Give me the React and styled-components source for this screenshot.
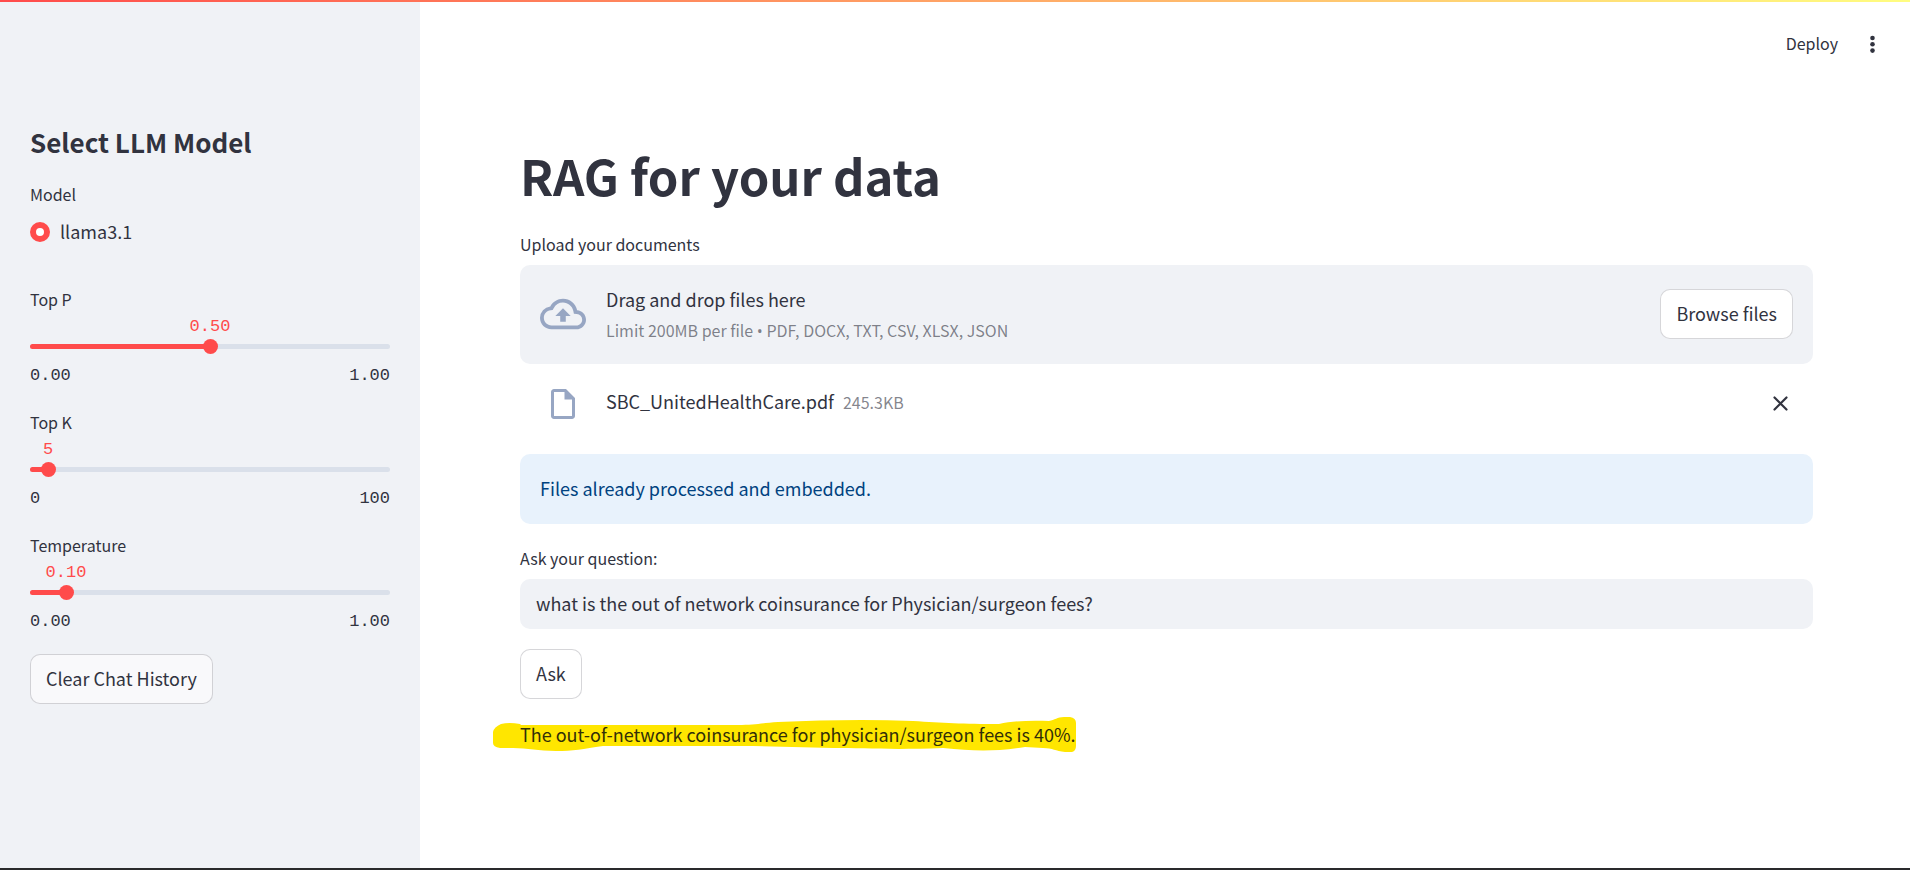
import React, { useId, useState } from "react";
import styled, { createGlobalStyle } from "styled-components";
import { MdOutlineInsertDriveFile } from "react-icons/md";

const sans = `"Noto Sans CJK SC", "Open Sans", sans-serif`;
const mono = `"Liberation Mono", monospace`;
const ink = "#31333f";
const faded = "rgba(49, 51, 63, 0.6)";
const border = "rgba(49, 51, 63, 0.2)";
const panel = "#f0f2f6";
const primary = "#ff4b4b";

const GlobalStyle = createGlobalStyle`
  *, *::before, *::after { box-sizing: border-box; }
  body { margin: 0; background: #fff; color: ${ink}; font: 400 18px/30px ${sans}; }
  button, input { font: inherit; color: inherit; }
  h1, h2, p { margin: 0; }
`;

const Page = styled.div`
  display: flex;
  flex-direction: column;
  min-height: 100vh;
  border-bottom: 2px solid #2a2a2c;
`;

const Decoration = styled.div`
  height: 2px;
  background: linear-gradient(90deg, #ff4b4b, #fffd80);
`;

const Columns = styled.div`
  display: flex;
  flex: 1;
`;

const Sidebar = styled.aside`
  display: flex;
  flex-direction: column;
  align-items: stretch;
  gap: 20px;
  flex: 0 0 420px;
  padding: 121px 30px 20px;
  background: ${panel};
`;

const SidebarTitle = styled.h2`
  font-size: 26px;
  line-height: 38px;
  font-weight: 600;
`;

const Main = styled.main`
  flex: 1;
  min-width: 0;
`;

const Toolbar = styled.header`
  display: flex;
  align-items: center;
  justify-content: flex-end;
  gap: 20px;
  height: 84px;
  padding: 0 22px;
`;

const PlainButton = styled.button`
  display: flex;
  align-items: center;
  justify-content: center;
  min-width: 30px;
  height: 30px;
  padding: 0 0 ${(p) => (p.$text ? "2px" : "0")};
  border: 0;
  background: none;
  font-size: 16px;
  cursor: pointer;
`;

const Content = styled.div`
  display: flex;
  flex-direction: column;
  gap: 20px;
  padding: 54px 97px 60px 100px;
`;

const Title = styled.h1`
  font-size: 49px;
  line-height: 70px;
  font-weight: 700;
`;

const Label = styled.label`
  display: block;
  margin-bottom: ${(p) => (p.$tight ? "2px" : "6px")};
  font-size: 16px;
  line-height: 29px;
`;

const RadioGroup = styled.fieldset`
  margin: 0;
  padding: 0 0 19px;
  border: 0;
`;

const Legend = styled.legend`
  margin-bottom: 8px;
  padding: 0;
  font-size: 16px;
  line-height: 27px;
`;

const RadioOption = styled.label`
  display: flex;
  align-items: center;
  gap: 10px;
`;

const Radio = styled.input`
  appearance: none;
  width: 20px;
  height: 20px;
  margin: 2px 0 0;
  border: 6px solid ${primary};
  border-radius: 50%;
  background: #fff;
`;

const SliderBlock = styled.div`
  padding-bottom: 2px;
`;

const ValueRow = styled.div`
  position: relative;
  height: 20px;
  margin-bottom: 3px;
`;

const Value = styled.output`
  position: absolute;
  transform: translateX(-50%);
  color: ${primary};
  font: 17px/22px ${mono};
`;

const SliderTrack = styled.div`
  display: grid;
  align-items: center;
  height: 15px;
  > * { grid-area: 1 / 1; }
`;

const Rail = styled.div`
  height: 5px;
  border-radius: 3px;
  background: #dae0ea;
  overflow: hidden;
`;

const RailFill = styled.div`
  height: 100%;
  background: ${primary};
`;

const Range = styled.input`
  appearance: none;
  width: calc(100% + 15px);
  height: 15px;
  margin: 0 -7px;
  background: transparent;
  cursor: pointer;
  &::-webkit-slider-thumb {
    appearance: none;
    width: 15px;
    height: 15px;
    border: 0;
    border-radius: 50%;
    background: ${primary};
  }
`;

const Ticks = styled.div`
  display: flex;
  justify-content: space-between;
  margin-top: 12px;
  font: 17px/20px ${mono};
`;

const Button = styled.button`
  align-self: flex-start;
  height: 50px;
  padding: 0 15px 2px;
  border: 1px solid ${border};
  border-radius: 10px;
  background: ${(p) => (p.$soft ? "#f9f9fb" : "#fff")};
  white-space: nowrap;
  cursor: pointer;
`;

const Dropzone = styled.section`
  display: flex;
  align-items: center;
  gap: 20px;
  min-height: 99px;
  padding: 0 20px 1px;
  border-radius: 10px;
  background: ${panel};
  > button { align-self: center; }
`;

const IconSlot = styled.div`
  display: flex;
  justify-content: center;
  flex: 0 0 46px;
  color: #97a6c3;
`;

const DropText = styled.div`
  display: grid;
  gap: 3px;
  flex: 1;
`;

const Small = styled.span`
  color: ${faded};
  font-size: 16px;
  line-height: 27px;
`;

const Bullet = styled.span`
  font-family: "Open Sans", sans-serif;
`;

const FileRow = styled.div`
  display: flex;
  align-items: flex-start;
  gap: 20px;
  margin: 22px 0 12px;
  padding: 0 18px 0 20px;
`;

const FileInfo = styled.div`
  display: flex;
  align-items: baseline;
  gap: 9px;
  flex: 1;
`;

const FileSize = styled.span`
  color: ${faded};
  font-size: 16px;
`;

const Info = styled.div`
  padding: 19px 20px 21px;
  border-radius: 10px;
  background: #e8f2fc;
  color: #004280;
`;

const TextInput = styled.input`
  display: block;
  width: 100%;
  height: 50px;
  padding: 0 16px 2px;
  border: 0;
  border-radius: 10px;
  background: ${panel};
`;

const Answer = styled.p`
  position: relative;
  color: #322f08;
`;

const AnswerText = styled.span`
  position: relative;
`;

const Marker = styled.svg`
  position: absolute;
  left: -27px;
  top: -2px;
`;

function CloudUploadIcon() {
  return (
    <svg width="46" height="46" viewBox="0 0 24 24" fill="currentColor" aria-hidden="true">
      <path d="M19.35 10.04A7.49 7.49 0 0 0 12 4C9.11 4 6.6 5.64 5.35 8.04A5.994 5.994 0 0 0 0 14c0 3.31 2.69 6 6 6h13c2.76 0 5-2.24 5-5 0-2.64-2.05-4.78-4.65-4.96zM19 18H6c-2.21 0-4-1.79-4-4 0-2.05 1.53-3.76 3.56-3.97l1.07-.11.5-.95A5.469 5.469 0 0 1 12 6c2.62 0 4.88 1.86 5.39 4.43l.3 1.5 1.53.11A2.98 2.98 0 0 1 22 15c0 1.65-1.35 3-3 3zM8 13h2.55v3h2.9v-3H16l-4-4z" />
    </svg>
  );
}

function Slider({ label, min, max, step, initial, digits }) {
  const id = useId();
  const [value, setValue] = useState(initial);
  const percent = ((value - min) / (max - min)) * 100;
  return (
    <SliderBlock>
      <Label htmlFor={id} $tight>{label}</Label>
      <ValueRow>
        <Value htmlFor={id} style={{ left: `${percent}%` }}>{value.toFixed(digits)}</Value>
      </ValueRow>
      <SliderTrack>
        <Rail><RailFill style={{ width: `${percent}%` }} /></Rail>
        <Range
          id={id}
          type="range"
          min={min}
          max={max}
          step={step}
          value={value}
          onChange={(e) => setValue(Number(e.target.value))}
        />
      </SliderTrack>
      <Ticks>
        <span>{min.toFixed(digits)}</span>
        <span>{max.toFixed(digits)}</span>
      </Ticks>
    </SliderBlock>
  );
}

export default function App() {
  const [question, setQuestion] = useState(
    "what is the out of network coinsurance for Physician/surgeon fees?"
  );
  return (
    <Page>
      <GlobalStyle />
      <Decoration />
      <Columns>
        <Sidebar>
          <SidebarTitle>Select LLM Model</SidebarTitle>
          <RadioGroup>
            <Legend>Model</Legend>
            <RadioOption>
              <Radio type="radio" name="model" value="llama3.1" defaultChecked />
              llama3.1
            </RadioOption>
          </RadioGroup>
          <Slider label="Top P" min={0} max={1} step={0.01} initial={0.5} digits={2} />
          <Slider label="Top K" min={0} max={100} step={1} initial={5} digits={0} />
          <Slider label="Temperature" min={0} max={1} step={0.01} initial={0.1} digits={2} />
          <Button type="button" $soft>Clear Chat History</Button>
        </Sidebar>
        <Main>
          <Toolbar>
            <PlainButton type="button" $text>Deploy</PlainButton>
            <PlainButton type="button" aria-label="Main menu">
              <svg width="30" height="30" viewBox="0 0 30 30" fill={ink}>
                <circle cx="14.5" cy="9" r="2.3" />
                <circle cx="14.5" cy="15.3" r="2.3" />
                <circle cx="14.5" cy="21.6" r="2.3" />
              </svg>
            </PlainButton>
          </Toolbar>
          <Content>
            <Title>RAG for your data</Title>
            <div>
              <Label as="div">Upload your documents</Label>
              <Dropzone aria-label="Upload your documents">
                <IconSlot><CloudUploadIcon /></IconSlot>
                <DropText>
                  <span>Drag and drop files here</span>
                  <Small>
                    Limit 200MB per file <Bullet>•</Bullet> PDF, DOCX, TXT, CSV, XLSX, JSON
                  </Small>
                </DropText>
                <Button type="button">Browse files</Button>
              </Dropzone>
              <FileRow>
                <IconSlot><MdOutlineInsertDriveFile size={36} /></IconSlot>
                <FileInfo>
                  <span>SBC_UnitedHealthCare.pdf</span>
                  <FileSize>245.3KB</FileSize>
                </FileInfo>
                <PlainButton type="button" aria-label="Remove file">
                  <svg width="30" height="30" viewBox="0 0 30 30" stroke={ink} strokeWidth="2.2" strokeLinecap="round">
                    <path d="M9.5 11.5 21.5 23.5M21.5 11.5 9.5 23.5" />
                  </svg>
                </PlainButton>
              </FileRow>
            </div>
            <Info role="status">Files already processed and embedded.</Info>
            <div>
              <Label htmlFor="question">Ask your question:</Label>
              <TextInput
                id="question"
                type="text"
                value={question}
                onChange={(e) => setQuestion(e.target.value)}
              />
            </div>
            <Button type="button">Ask</Button>
            <Answer>
              <Marker width="584" height="36" viewBox="0 0 584 36" aria-hidden="true">
                <path
                  fill="#ffe600"
                  d="M0 15Q1 10 8 7Q16 5 27 7L28 8H245C262 8 270 6 285 5C330 3 375 2 420 4C450 6 470 7 506 7C520 4 538 3 556 4C562 3 564 0 571 0H577Q583 1 583 6V29Q583 34 579 35H572C562 34 560 31 550 31L532 30C500 35 480 34 450 31C400 33 370 31 340 31L260 29H110C90 32 80 34 63 34C45 34 35 31 20 31L7 31Q0 30 0 26Z"
                />
              </Marker>
              <AnswerText>The out-of-network coinsurance for physician/surgeon fees is 40%.</AnswerText>
            </Answer>
          </Content>
        </Main>
      </Columns>
    </Page>
  );
}
